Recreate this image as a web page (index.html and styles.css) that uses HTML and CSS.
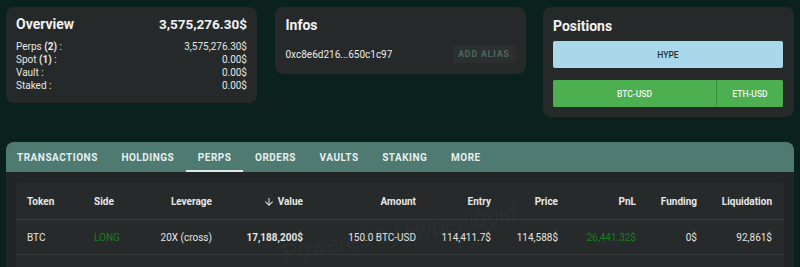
FILE: index.html
```html
<!DOCTYPE html>
<html lang="en">
<head>
<meta charset="utf-8">
<title>Wallet</title>
<link rel="stylesheet" href="styles.css">
</head>
<body>
<div class="page">
  <div class="cards">
    <section class="card overview">
      <div class="card-head">
        <h2 class="card-title">Overview</h2>
        <span class="total">3,575,276.30$</span>
      </div>
      <div class="ov-rows">
        <div class="ov-row"><span>Perps <b>(2)</b> :</span><span>3,575,276.30$</span></div>
        <div class="ov-row"><span>Spot <b>(1)</b> :</span><span>0.00$</span></div>
        <div class="ov-row"><span>Vault :</span><span>0.00$</span></div>
        <div class="ov-row"><span>Staked :</span><span>0.00$</span></div>
      </div>
    </section>
    <section class="card infos">
      <h2 class="card-title">Infos</h2>
      <div class="info-row">
        <span class="address">0xc8e6d216...650c1c97</span>
        <button class="alias-btn" type="button">ADD ALIAS</button>
      </div>
    </section>
    <section class="card positions">
      <h2 class="card-title">Positions</h2>
      <div class="pos-bar spot">
        <div class="pos-seg hype" style="flex: 1 1 100%">HYPE</div>
      </div>
      <div class="pos-bar perps">
        <div class="pos-seg perp" style="flex: 0 0 163px">BTC-USD</div>
        <div class="pos-seg perp" style="flex: 1 1 auto">ETH-USD</div>
      </div>
    </section>
  </div>

  <section class="panel">
    <nav class="tabs">
      <span class="tab">TRANSACTIONS</span>
      <span class="tab">HOLDINGS</span>
      <span class="tab active">PERPS</span>
      <span class="tab">ORDERS</span>
      <span class="tab">VAULTS</span>
      <span class="tab">STAKING</span>
      <span class="tab">MORE</span>
    </nav>
    <div class="panel-body">
      <div class="table">
        <div class="watermark">Powered by Hyperliquid</div>
        <div class="trow thead">
          <span class="c-left">Token</span>
          <span class="c-left">Side</span>
          <span class="c-right">Leverage</span>
          <span class="c-right sort"><svg class="arrow" viewBox="0 0 24 24" width="12" height="12"><path d="M20 12l-1.41-1.41L13 16.17V4h-2v12.17l-5.58-5.59L4 12l8 8 8-8z" fill="currentColor"/></svg>Value</span>
          <span class="c-right">Amount</span>
          <span class="c-right">Entry</span>
          <span class="c-right">Price</span>
          <span class="c-right">PnL</span>
          <span class="c-right">Funding</span>
          <span class="c-right">Liquidation</span>
        </div>
        <div class="trow tbody">
          <span class="c-left">BTC</span>
          <span class="c-left long">LONG</span>
          <span class="c-right">20X (cross)</span>
          <span class="c-right strong">17,188,200$</span>
          <span class="c-right">150.0 BTC-USD</span>
          <span class="c-right">114,411.7$</span>
          <span class="c-right">114,588$</span>
          <span class="c-right gain">26,441.32$</span>
          <span class="c-right">0$</span>
          <span class="c-right">92,861$</span>
        </div>
      </div>
    </div>
  </section>
</div>
</body>
</html>
```

FILE: styles.css
```css
* { box-sizing: border-box; }

html, body {
  margin: 0;
  padding: 0;
  background: #0b211d;
  font-family: Roboto, "Liberation Sans", Arial, sans-serif;
  color: #ececec;
}

.page {
  padding: 7px 6px 0 6px;
}

.cards {
  display: grid;
  grid-template-columns: 251px 251px 251px;
  column-gap: 17.5px;
  align-items: start;
}

.card {
  background: #252929;
  border-radius: 8px;
  padding: 0 10px;
}

.card-title {
  margin: 0;
  font-size: 14px;
  line-height: 18px;
  font-weight: 700;
  color: #f2f2f2;
}

/* Overview */
.overview {
  padding-top: 8px;
  padding-bottom: 11px;
}
.card-head {
  display: flex;
  justify-content: space-between;
  align-items: center;
}
.total {
  font-size: 13.5px;
  line-height: 18px;
  font-weight: 700;
  color: #f2f2f2;
}
.ov-rows {
  margin-top: 6.5px;
  display: flex;
  flex-direction: column;
}
.ov-row {
  display: flex;
  justify-content: space-between;
  font-size: 10px;
  line-height: 13px;
  color: #e6e6e6;
}
.ov-row b { font-weight: 700; }

/* Infos */
.infos {
  padding-top: 9px;
  padding-bottom: 11px;
  padding-left: 11px;
}
.info-row {
  margin-top: 11px;
  display: flex;
  justify-content: space-between;
  align-items: center;
  height: 18px;
}
.address {
  font-size: 10px;
  color: #ececec;
}
.alias-btn {
  width: 63px;
  height: 18px;
  border: none;
  border-radius: 3px;
  background: #2b302f;
  color: #4b6962;
  font-family: Roboto, "Liberation Sans", Arial, sans-serif;
  font-size: 8.5px;
  font-weight: 700;
  letter-spacing: 1px;
  padding: 0;
}

/* Positions */
.positions {
  padding-top: 10px;
  padding-bottom: 10px;
  padding-right: 11px;
}
.pos-bar {
  display: flex;
  height: 27px;
  border-radius: 2px;
  overflow: hidden;
}
.spot { margin-top: 6px; }
.perps { margin-top: 12px; gap: 1px; background: #3b8d3f; }
.pos-seg {
  display: flex;
  align-items: center;
  justify-content: center;
  font-size: 8.5px;
  font-weight: 500;
}
.hype {
  background: #a8d8ea;
  color: #243238;
}
.perp {
  background: #4caf50;
  color: #f1f7f1;
}

/* Panel */
.panel {
  margin-top: 25px;
  border-radius: 8px 8px 0 0;
  overflow: hidden;
  background: #222525;
}
.tabs {
  display: flex;
  height: 30px;
  background: #4e7a72;
}
.tab {
  display: flex;
  align-items: center;
  padding: 2px 11.8px 0 11.8px;
  font-size: 10px;
  font-weight: 700;
  letter-spacing: 0.5px;
  color: #e6efed;
  border-bottom: 2px solid transparent;
}
.tab:first-child { padding-left: 11px; }
.tab.active { border-bottom-color: #dfe9e6; }

.panel-body {
  padding: 11px 10px 0 10px;
}

.table {
  position: relative;
  background: #262a2a;
  min-height: 120px;
  border-radius: 2px;
  overflow: hidden;
}

.trow {
  display: grid;
  grid-template-columns: 67px 46px 72px 91px 113px 75px 67px 78px 61px 75px;
  padding: 0 12px 0 11px;
  align-items: center;
  font-size: 10px;
  border-bottom: 1px solid #363a3a;
}
.thead {
  height: 37px;
  font-weight: 700;
  color: #e8e8e8;
  padding-top: 1px;
}
.tbody {
  height: 35px;
  color: #e4e4e4;
  padding-top: 1px;
}

.c-left { text-align: left; }
.c-right { text-align: right; }

.sort {
  display: flex;
  justify-content: flex-end;
  align-items: center;
  gap: 3px;
}
.arrow { color: #e6dde1; }

.long, .gain { color: #17801b; }
.strong { font-weight: 700; }

.watermark {
  position: absolute;
  left: 384px;
  top: 50px;
  transform: translate(-50%, -50%) rotate(-10deg);
  font-size: 23px;
  font-weight: 300;
  color: rgba(255, 255, 255, 0.055);
  white-space: nowrap;
  pointer-events: none;
}
```
